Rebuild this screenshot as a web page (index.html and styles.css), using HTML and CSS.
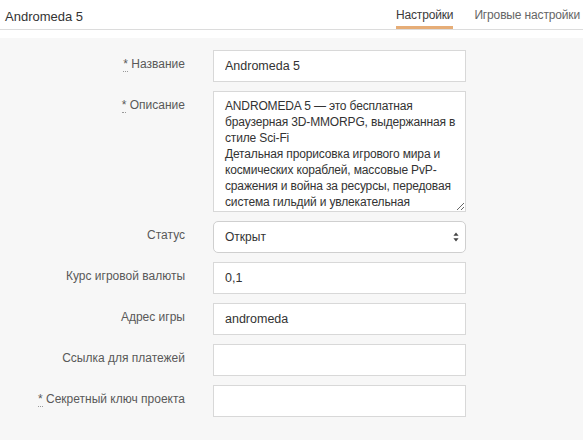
FILE: index.html
```html
<!DOCTYPE html>
<html lang="ru">
<head>
<meta charset="utf-8">
<title>Andromeda 5</title>
<link rel="stylesheet" href="styles.css">
</head>
<body>
<header class="header">
  <div class="title">Andromeda 5</div>
  <nav class="tabs">
    <a class="tab tab-active">Настройки</a>
    <a class="tab">Игровые настройки</a>
  </nav>
</header>
<main class="content">
  <form class="form">
    <label class="label"><abbr class="req">*</abbr> Название</label>
    <input class="field" type="text" value="Andromeda 5">

    <label class="label"><abbr class="req">*</abbr> Описание</label>
    <textarea class="field area">ANDROMEDA 5 — это бесплатная браузерная 3D-MMORPG, выдержанная в стиле Sci-Fi
Детальная прорисовка игрового мира и космических кораблей, массовые PvP-сражения и война за ресурсы, передовая система гильдий и увлекательная сюжетная линия.</textarea>

    <label class="label">Статус</label>
    <div class="select-wrap">
      <select class="field select">
        <option>Открыт</option>
        <option>Закрыт</option>
      </select>
      <svg class="select-arrows" width="6" height="10" viewBox="0 0 6 10"><path d="M3 0.5 L5.6 3.8 H0.4 Z M3 9.5 L5.6 6.2 H0.4 Z" fill="#444"/></svg>
    </div>

    <label class="label">Курс игровой валюты</label>
    <input class="field" type="text" value="0,1">

    <label class="label">Адрес игры</label>
    <input class="field" type="text" value="andromeda">

    <label class="label">Ссылка для платежей</label>
    <input class="field" type="text" value="">

    <label class="label"><abbr class="req">*</abbr> Секретный ключ проекта</label>
    <input class="field" type="text" value="">
  </form>
</main>
</body>
</html>
```
FILE: styles.css
```css
html, body {
  margin: 0;
  padding: 0;
}
body {
  font-family: "Liberation Sans", Arial, sans-serif;
  font-size: 13px;
  color: #333;
  background: #f7f7f7;
  height: 440px;
  overflow: hidden;
}
.header {
  display: flex;
  align-items: stretch;
  height: 29px;
  padding-left: 4px;
  background: #fff;
  border-bottom: 1px solid #dcdcdc;
  box-shadow: 0 8px 0 #fff;
  margin-bottom: 8px;
}
.title {
  flex: 1;
  align-self: center;
  padding-left: 1px;
  padding-top: 4px;
  font-size: 13px;
  color: #333;
}
.tabs {
  display: flex;
  gap: 21px;
  padding-right: 3px;
}
.tab {
  display: flex;
  align-items: center;
  padding-top: 3px;
  border-bottom: 3px solid transparent;
  color: #666;
  font-size: 12px;
  letter-spacing: -0.15px;
}
.tab-active {
  color: #3a3a3a;
  border-bottom-color: #e6ad77;
}
.content {
  padding-top: 12px;
}
.form {
  display: grid;
  grid-template-columns: 185px 253px;
  column-gap: 28px;
  row-gap: 9px;
}
.label {
  text-align: right;
  color: #595959;
  font-size: 12px;
  padding-top: 6px;
  line-height: 16px;
}
.req {
  text-decoration: none;
  border-bottom: 1px dotted #999;
}
.field {
  display: block;
  box-sizing: border-box;
  width: 253px;
  height: 32px;
  margin: 0;
  border: 1px solid #d8d8d8;
  border-radius: 0;
  background: #fff;
  padding: 0 11px;
  font-family: "Liberation Sans", Arial, sans-serif;
  font-size: 12.5px;
  color: #333;
  outline: none;
}
.area {
  height: 121px;
  padding: 6px 5px 4px 11px;
  font-size: 12px;
  letter-spacing: -0.15px;
  line-height: 16px;
  overflow: hidden;
  resize: vertical;
}
.select-wrap {
  position: relative;
  width: 253px;
  height: 32px;
}
.select {
  -webkit-appearance: none;
  appearance: none;
  border-color: #cfcfcf;
  border-radius: 5px;
  padding: 0 11px;
  font-size: 12px;
}
.select-arrows {
  position: absolute;
  right: 7px;
  top: 11px;
  pointer-events: none;
}
```
